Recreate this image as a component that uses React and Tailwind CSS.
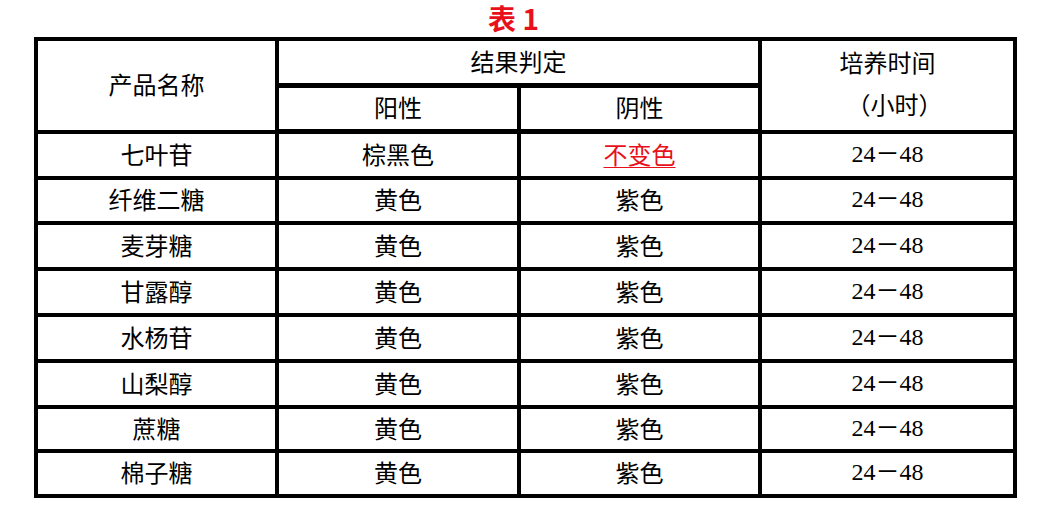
import React from 'react';

const ROWS = [
    { name: '七叶苷', pos: '棕黑色', neg: '不变色', h: 'h-[42px]', highlight: true },
    { name: '纤维二糖', pos: '黄色', neg: '紫色', h: 'h-[41px]' },
    { name: '麦芽糖', pos: '黄色', neg: '紫色', h: 'h-[42px]' },
    { name: '甘露醇', pos: '黄色', neg: '紫色', h: 'h-[42px]' },
    { name: '水杨苷', pos: '黄色', neg: '紫色', h: 'h-[42px]' },
    { name: '山梨醇', pos: '黄色', neg: '紫色', h: 'h-[42px]' },
    { name: '蔗糖', pos: '黄色', neg: '紫色', h: 'h-[40px]' },
    { name: '棉子糖', pos: '黄色', neg: '紫色', h: 'h-[41px]' },
];

const cjk = "font-['Noto_Sans_CJK_SC',sans-serif]";

function Cell({ children, className = '' }) {
    return (
        <div className={`bg-white flex items-center justify-center text-[24px] text-black pb-[3px] ${className}`}>
            {children}
        </div>
    );
}

export default function App() {
    return (
        <div className={`w-[1047px] h-[512px] bg-white ${cjk}`}>
            {/* 标题 */}
            <div className="h-[37px] pr-[20px] text-center text-[28px] leading-[36px] font-bold text-[#e8101a]">
                表 1
            </div>

            {/* 表格 */}
            <div className="pl-[34px]">
                <div className="w-[983px] grid grid-cols-[237px_238px_237px_251px] gap-[4px] p-[4px] bg-black">
                    <Cell className="row-span-2">产品名称</Cell>
                    <Cell className="col-span-2 h-[42px]">结果判定</Cell>
                    <Cell className="row-span-2 flex-col leading-[42px] pb-[5px]">
                        <span>培养时间</span>
                        <span className="pl-[14px]">（小时）</span>
                    </Cell>
                    <Cell className="h-[41px]">阳性</Cell>
                    <Cell className="h-[41px]">阴性</Cell>

                    {ROWS.map((row) => (
                        <React.Fragment key={row.name}>
                            <Cell className={row.h}>{row.name}</Cell>
                            <Cell className={row.h}>{row.pos}</Cell>
                            <Cell className={row.h}>
                                {row.highlight ? (
                                    <span className="text-[#e8101a] underline underline-offset-[3px] decoration-[1px]">
                                        {row.neg}
                                    </span>
                                ) : (
                                    row.neg
                                )}
                            </Cell>
                            <Cell className={row.h}>
                                <span className="font-['Liberation_Serif','Noto_Sans_CJK_SC',serif]">24－48</span>
                            </Cell>
                        </React.Fragment>
                    ))}
                </div>
            </div>
        </div>
    );
}
